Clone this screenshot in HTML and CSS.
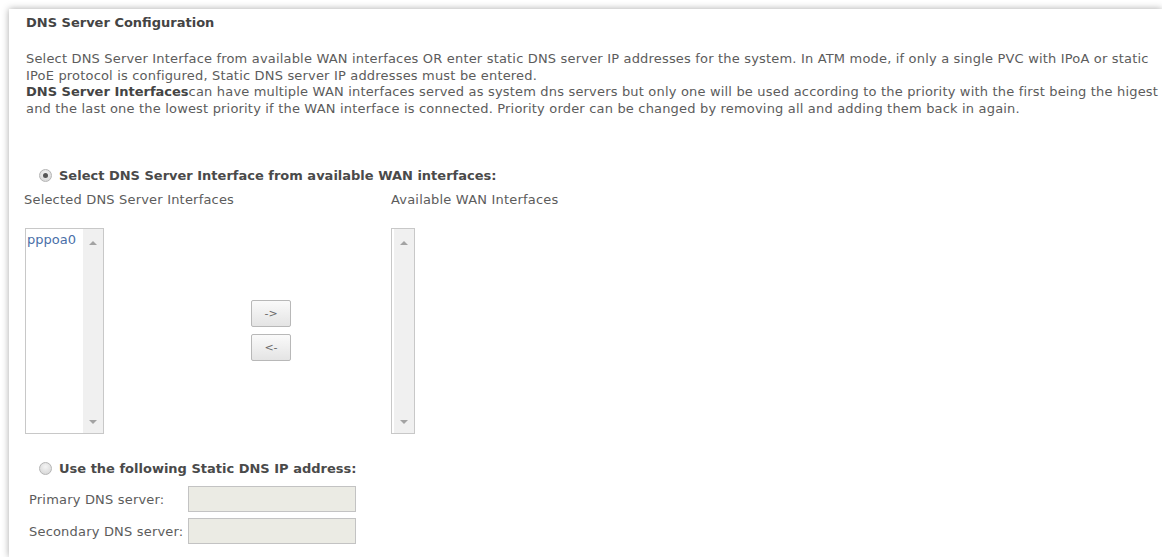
FILE: index.html
```html
<!DOCTYPE html>
<html lang="en">
<head>
<meta charset="utf-8">
<title>DNS Server Configuration</title>
<link rel="stylesheet" href="styles.css">
</head>
<body>
<div class="panel">
  <div class="title">DNS Server Configuration</div>
  <p class="intro">Select DNS Server Interface from available WAN interfaces OR enter static DNS server IP addresses for the system. In ATM mode, if only a single PVC with IPoA or static IPoE protocol is configured, Static DNS server IP addresses must be entered.<br><b>DNS Server Interfaces</b>can have multiple WAN interfaces served as system dns servers but only one will be used according to the priority with the first being the higest and the last one the lowest priority if the WAN interface is connected. Priority order can be changed by removing all and adding them back in again.</p>

  <div class="choice first">
    <span class="radio checked"></span>
    <span class="choice-label">Select DNS Server Interface from available WAN interfaces:</span>
  </div>

  <div class="lists">
    <div class="col col-left">
      <div class="cap">Selected DNS Server Interfaces</div>
      <div class="listbox wide">
        <div class="items"><div class="item">pppoa0</div></div>
        <div class="sbar"><span class="arr up"></span><span class="arr down"></span></div>
      </div>
    </div>
    <div class="col col-mid">
      <button class="mv" type="button">-&gt;</button>
      <button class="mv" type="button">&lt;-</button>
    </div>
    <div class="col col-right">
      <div class="cap">Available WAN Interfaces</div>
      <div class="listbox narrow">
        <div class="items"></div>
        <div class="sbar"><span class="arr up"></span><span class="arr down"></span></div>
      </div>
    </div>
  </div>

  <div class="choice second">
    <span class="radio"></span>
    <span class="choice-label">Use the following Static DNS IP address:</span>
  </div>

  <div class="fields">
    <div class="row"><span class="flabel">Primary DNS server:</span><span class="box"></span></div>
    <div class="row"><span class="flabel">Secondary DNS server:</span><span class="box"></span></div>
  </div>
</div>
</body>
</html>
```

FILE: styles.css
```css
html, body {
  margin: 0;
  background: #fff;
  overflow: hidden;
  height: 100%;
}

body {
  font-family: "DejaVu Sans", sans-serif;
  font-size: 13px;
  letter-spacing: 0.19px;
  color: #5c5c5c;
}

b,
.title,
.choice-label {
  letter-spacing: 0;
}

/* page card: shaded on the top and left, runs to the window's right and bottom edges */
.panel {
  margin: 9px 0 0 9px;
  width: calc(100% - 9px);
  height: calc(100% - 9px);
  overflow: hidden;
  background: #fff;
  box-shadow: 0 0 7px rgba(0, 0, 0, 0.35);
  padding: 6px 0 0 15px;
  box-sizing: border-box;
}

.title {
  font-weight: bold;
  color: #444;
  line-height: 16px;
  margin-left: 2px;
}

.intro {
  margin: 20px 0 0 2px;
  line-height: 16.5px;
  width: 1150px;
  letter-spacing: 0.18px;
}

.intro b {
  color: #444;
}

.choice {
  display: flex;
  align-items: center;
  gap: 7px;
  padding-left: 15px;
  height: 18px;
}

.choice.first {
  margin-top: 49px;
}

.choice.second {
  margin-top: 25px;
}

.choice-label {
  font-weight: bold;
  font-size: 13px;
  color: #4a4a4a;
}

.radio {
  width: 11px;
  height: 11px;
  border-radius: 50%;
  border: 1px solid #b5b5b5;
  background: radial-gradient(circle at 50% 35%, #f4f4f4, #d2d2d2);
  display: flex;
  align-items: center;
  justify-content: center;
}

.radio.checked::after {
  content: "";
  width: 5px;
  height: 5px;
  border-radius: 50%;
  background: #555;
}

.lists {
  display: flex;
  margin-top: 8px;
}

.col-left {
  width: 225px;
}

.col-mid {
  width: 142px;
  display: flex;
  flex-direction: column;
  gap: 7px;
  padding-top: 108px;
}

.cap {
  line-height: 16px;
  margin-bottom: 20px;
}

.listbox {
  display: flex;
  height: 206px;
  border: 1px solid #c8c8c8;
  box-sizing: border-box;
  background: #fff;
}

.listbox.wide {
  width: 79px;
  margin-left: 1px;
}

.listbox.narrow {
  width: 24px;
}

.items {
  flex: 1;
}

.item {
  color: #4a6fa8;
  letter-spacing: 0;
  padding: 3px 0 0 1px;
}

/* list scroll track with its two arrow heads */
.sbar {
  width: 20px;
  background: #f0f0f0;
  display: flex;
  flex-direction: column;
  justify-content: space-between;
  align-items: center;
  padding: 12px 0 9px;
}

.arr {
  width: 0;
  height: 0;
  border-left: 4px solid transparent;
  border-right: 4px solid transparent;
}

.arr.up {
  border-bottom: 4px solid #a3a3a3;
}

.arr.down {
  border-top: 4px solid #a3a3a3;
}

.mv {
  width: 40px;
  height: 27px;
  margin-left: 2px;
  border: 1px solid #b8b8b8;
  border-radius: 2px;
  background: linear-gradient(#fafafa, #e4e4e4);
  font-family: "DejaVu Sans", sans-serif;
  font-size: 11px;
  color: #6a6a6a;
  padding: 0;
}

.fields {
  margin-top: 9px;
  display: flex;
  flex-direction: column;
  gap: 6px;
  padding-left: 5px;
}

.row {
  display: flex;
  align-items: center;
}

.flabel {
  width: 159px;
}

.box {
  width: 168px;
  height: 26px;
  box-sizing: border-box;
  border: 1px solid #c3c3c3;
  background: #ebebe4;
}
```
